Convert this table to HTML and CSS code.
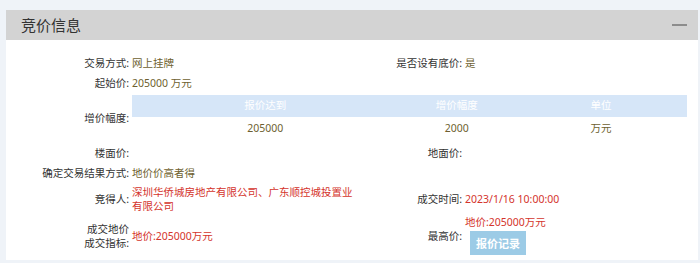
FILE: index.html
```html
<!DOCTYPE html>
<html lang="zh-CN">
<head>
<meta charset="utf-8">
<title>竞价信息</title>
<link rel="stylesheet" href="styles.css">
</head>
<body>
<div class="panel">
  <div class="panel-head">
    <h2 class="title">竞价信息</h2>
    <span class="collapse"></span>
  </div>
  <div class="info">
    <div class="lbl">交易方式:</div>
    <div class="val olive">网上挂牌</div>
    <div class="lbl">是否设有底价:</div>
    <div class="val olive">是</div>

    <div class="lbl">起始价:</div>
    <div class="val olive span3">205000 万元</div>

    <div class="lbl">增价幅度:</div>
    <div class="val span3 table-cell">
      <table class="bid">
        <thead>
          <tr><th class="c1">报价达到</th><th class="c2">增价幅度</th><th class="c3">单位</th></tr>
        </thead>
        <tbody>
          <tr><td>205000</td><td>2000</td><td>万元</td></tr>
        </tbody>
      </table>
    </div>

    <div class="lbl">楼面价:</div>
    <div class="val"></div>
    <div class="lbl">地面价:</div>
    <div class="val"></div>

    <div class="lbl">确定交易结果方式:</div>
    <div class="val olive span3">地价价高者得</div>

    <div class="lbl">竞得人:</div>
    <div class="val red">深圳华侨城房地产有限公司、广东顺控城投置业有限公司</div>
    <div class="lbl">成交时间:</div>
    <div class="val red">2023/1/16 10:00:00</div>

    <div class="lbl">成交地价<br>成交指标:</div>
    <div class="val red">地价:205000万元</div>
    <div class="lbl">最高价:</div>
    <div class="val red tight">地价:205000万元<button class="btn" type="button">报价记录</button></div>
  </div>
</div>
</body>
</html>
```

FILE: styles.css
```css
html {
  background: #eff3f8;
}
body {
  margin: 0;
  font-family: "Noto Sans", "Noto Sans CJK SC", sans-serif;
  font-size: 10.5px;
  color: #333;
}
.panel {
  margin: 10px 2px 0 6px;
  background: #fff;
  padding-bottom: 2px;
}
.panel-head {
  height: 30px;
  background: #d3d3d3;
  display: flex;
  align-items: center;
  justify-content: space-between;
  padding: 0 11px 0 15px;
}
.title {
  margin: 0;
  font-size: 15px;
  font-weight: normal;
  line-height: 30px;
  color: #333;
  font-family: "Noto Sans CJK SC", sans-serif;
}
.collapse {
  width: 15px;
  height: 2px;
  background: #8c8c8c;
}
.info {
  display: grid;
  grid-template-columns: 124px 225px 108px 1fr;
  align-items: center;
  padding: 14px 11px 0 0;
}
.lbl {
  text-align: right;
  padding: 3px 1px 3px 0;
  line-height: 13.5px;
}
.val {
  padding: 3px 0 3px 2px;
  line-height: 13.5px;
  min-height: 13.5px;
}
.span3 {
  grid-column: span 3;
}
.olive {
  color: #6e5f30;
}
.red {
  color: #d4342c;
}
.tight {
  padding-top: 0;
}
.table-cell {
  padding: 2px 0 3px 2px;
}
.bid {
  width: 100%;
  border-collapse: collapse;
  table-layout: fixed;
}
.bid th {
  background: #d6e6f8;
  color: #fff;
  font-weight: normal;
  height: 22px;
  padding: 0;
}
.bid .c1 { width: 48%; }
.bid .c2 { width: 21%; }
.bid td {
  height: 24px;
  padding: 0;
  text-align: center;
  color: #6e5f30;
}
.btn {
  display: block;
  margin: 1px 0 0 5px;
  width: 56px;
  height: 24px;
  border: none;
  background: #9ccbe6;
  color: #fff;
  font-family: "Noto Sans CJK SC", sans-serif;
  font-size: 11px;
  font-weight: bold;
  padding: 0;
}
```
